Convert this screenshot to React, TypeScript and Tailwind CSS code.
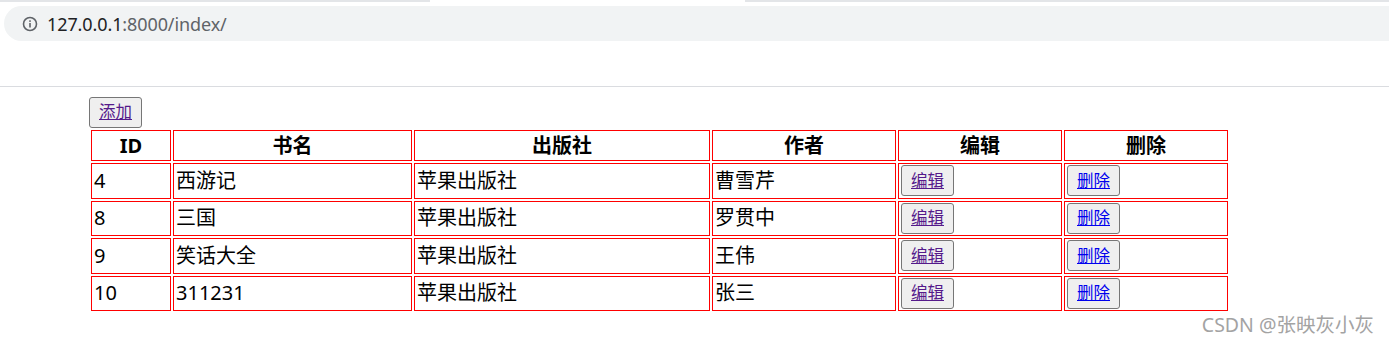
const books = [
  { id: "4", name: "西游记", press: "苹果出版社", author: "曹雪芹" },
  { id: "8", name: "三国", press: "苹果出版社", author: "罗贯中" },
  { id: "9", name: "笑话大全", press: "苹果出版社", author: "王伟" },
  { id: "10", name: "311231", press: "苹果出版社", author: "张三" },
];

const font = "font-['Noto_Sans','Noto_Sans_CJK_SC',sans-serif]";

function InfoIcon() {
  return (
    <svg width="16" height="16" viewBox="0 0 16 16" fill="none">
      <circle cx="8" cy="8" r="6.5" stroke="#5f6368" strokeWidth="1.6" />
      <rect x="7.2" y="7" width="1.6" height="4.5" fill="#5f6368" />
      <rect x="7.2" y="4.3" width="1.6" height="1.6" fill="#5f6368" />
    </svg>
  );
}

function LinkButton({ label, color }: { label: string; color: string }) {
  return (
    <button
      className={`h-[31px] w-[53px] bg-[#efefef] border border-[#767676] rounded-[3px] text-[16.5px] leading-none ${font}`}
    >
      <a href="#" className={`underline ${color}`}>
        {label}
      </a>
    </button>
  );
}

const th = "h-[31px] border border-[#ff0000] p-[1px] font-bold leading-[27px]";
const td = "h-[35.5px] border border-[#ff0000] px-[2px] py-0 leading-[28px]";

export default function App() {
  return (
    <div className={`relative h-[341px] w-full overflow-hidden bg-white text-black ${font}`}>
      {/* Browser chrome */}
      <div className="h-[87px] border-b border-[#dadce0]">
        <div className="flex h-[2px]">
          <div className="w-[430px] bg-[#e3e5e8]" />
          <div className="w-[315px] bg-white" />
          <div className="flex-1 bg-[#e3e5e8]" />
        </div>
        <div className="ml-[4px] mt-[4px] h-[35px] w-[1420px] rounded-[18px] bg-[#f1f3f4] flex items-center">
          <div className="ml-[18px] flex items-center">
            <InfoIcon />
          </div>
          <div className="ml-[9px] text-[18px] leading-none tracking-[-0.1px] text-[#202124]">
            127.0.0.1<span className="text-[#5f6368]">:8000/index/</span>
          </div>
        </div>
      </div>

      {/* Page */}
      <div className="pt-[10px] pl-[89px]">
        <button className="block h-[31px] w-[53px] bg-[#efefef] border border-[#767676] rounded-[3px] text-[16.5px] leading-none">
          <a href="#" className="underline text-[#551a8b]">
            添加
          </a>
        </button>
        <table className="table-fixed border-separate border-spacing-[2px] text-[20px]">
          <thead>
            <tr>
              <th className={`w-[80px] ${th}`}>ID</th>
              <th className={`w-[239px] ${th}`}>书名</th>
              <th className={`w-[296px] ${th}`}>出版社</th>
              <th className={`w-[184px] ${th}`}>作者</th>
              <th className={`w-[164px] ${th}`}>编辑</th>
              <th className={`w-[164px] ${th}`}>删除</th>
            </tr>
          </thead>
          <tbody>
            {books.map((b) => (
              <tr key={b.id}>
                <td className={td}>{b.id}</td>
                <td className={td}>{b.name}</td>
                <td className={td}>{b.press}</td>
                <td className={td}>{b.author}</td>
                <td className={td}>
                  <LinkButton label="编辑" color="text-[#551a8b]" />
                </td>
                <td className={td}>
                  <LinkButton label="删除" color="text-[#0000ee]" />
                </td>
              </tr>
            ))}
          </tbody>
        </table>
      </div>

      {/* Watermark */}
      <div className="absolute right-[15px] bottom-[7px] text-[19.5px] leading-none text-[#a3a3a3]">
        CSDN @张映灰小灰
      </div>
    </div>
  );
}
